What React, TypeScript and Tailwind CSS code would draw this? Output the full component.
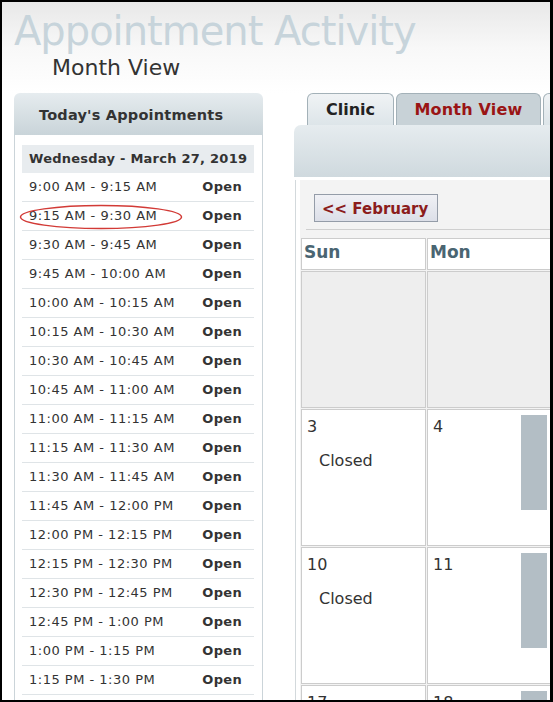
import React from "react";

const slots = [
  "9:00 AM - 9:15 AM",
  "9:15 AM - 9:30 AM",
  "9:30 AM - 9:45 AM",
  "9:45 AM - 10:00 AM",
  "10:00 AM - 10:15 AM",
  "10:15 AM - 10:30 AM",
  "10:30 AM - 10:45 AM",
  "10:45 AM - 11:00 AM",
  "11:00 AM - 11:15 AM",
  "11:15 AM - 11:30 AM",
  "11:30 AM - 11:45 AM",
  "11:45 AM - 12:00 PM",
  "12:00 PM - 12:15 PM",
  "12:15 PM - 12:30 PM",
  "12:30 PM - 12:45 PM",
  "12:45 PM - 1:00 PM",
  "1:00 PM - 1:15 PM",
  "1:15 PM - 1:30 PM",
  "1:30 PM - 1:45 PM",
];

const days = ["Sun", "Mon", "Tue", "Wed", "Thu", "Fri", "Sat"];

// March 2019 starts on a Friday
const weeks: (number | null)[][] = [
  [null, null, null, null, null, 1, 2],
  [3, 4, 5, 6, 7, 8, 9],
  [10, 11, 12, 13, 14, 15, 16],
  [17, 18, 19, 20, 21, 22, 23],
];

function DayCell({ day, col }: { day: number | null; col: number }) {
  if (day === null) {
    return <div className="h-[137px] border border-[#cccccc] bg-[#eeeeee]" />;
  }
  const closed = col === 0 || col === 6;
  return (
    <div className="h-[137px] border border-[#cccccc] bg-white flex pt-[5px] pl-[5px]">
      <div className="flex-1 min-w-0">
        <div className="mt-[1.5px] text-[16px] leading-[20px] text-[#333]">{day}</div>
        {closed && (
          <div className="mt-[14px] pl-[12px] text-[16px] leading-[20px] text-[#333]">Closed</div>
        )}
      </div>
      {!closed && <div className="w-[26px] h-[95px] mr-[4px] shrink-0 bg-[#b3bec5]" />}
    </div>
  );
}

export default function App() {
  return (
    <div className="w-[553px] h-[702px] overflow-hidden bg-white border-black border-t-2 border-l-2 border-b-2 border-r-[3px] font-['DejaVu_Sans',Verdana,sans-serif]">
      {/* page header */}
      <div className="h-[91px] bg-gradient-to-b from-[#e8e8e8] via-[#f8f8f8] to-white pt-[9px] pl-[12px]">
        <h1 className="text-[40px] leading-[40px] tracking-[-1px] text-[#c7d4db] whitespace-nowrap">
          Appointment Activity
        </h1>
        <h2 className="mt-[4px] ml-[38px] text-[22px] leading-[26px] text-[#333]">Month View</h2>
      </div>

      <div className="flex items-start">
        {/* today's appointments */}
        <div className="ml-[12px] w-[249px] shrink-0">
          <div className="h-[42px] rounded-t-[6px] bg-gradient-to-b from-[#e6ecef] to-[#c9d4d9] flex items-center pt-[3px] pl-[25px] text-[14.5px] tracking-[0.2px] font-bold text-[#333]">
            Today's Appointments
          </div>
          <div className="border-x border-[#cbd4d9] pl-[7px] pr-[8px] pt-[10px]">
            <div className="h-[28px] bg-[#e8ecef] flex items-center pl-[7px] text-[13px] tracking-[0.25px] font-bold text-[#333] whitespace-nowrap">
              Wednesday - March 27, 2019
            </div>
            {slots.map((s, i) => (
              <div
                key={s}
                className="relative h-[29px] border-b border-[#dfe4e7] flex items-center justify-between pl-[7px] pr-[12px] text-[13px] text-[#333]"
              >
                <span className="tracking-[0.5px]">{s}</span>
                <span className="font-bold tracking-[0.3px]">Open</span>
                {i === 1 && (
                  <svg
                    className="absolute left-[-3px] top-[2px]"
                    width="164"
                    height="26"
                    viewBox="0 0 164 26"
                  >
                    <ellipse cx="82" cy="13" rx="80.5" ry="11.5" fill="none" stroke="#d23a36" strokeWidth="1.5" />
                  </svg>
                )}
              </div>
            ))}
          </div>
        </div>

        {/* month view panel */}
        <div className="ml-[31px] w-[900px] shrink-0">
          <div className="flex items-end gap-[2px] pl-[13px] h-[32px]">
            <div className="w-[87px] h-[32px] rounded-t-[6px] border border-b-0 border-[#a3b1b8] bg-gradient-to-b from-[#f0f3f5] to-[#dde5e9] flex items-center justify-center text-[16px] font-bold text-[#222]">
              Clinic
            </div>
            <div className="w-[145px] h-[32px] rounded-t-[6px] border border-b-0 border-[#a3b1b8] bg-[#c8d2d7] flex items-center justify-center text-[16px] tracking-[0.2px] font-bold text-[#9a1414]">
              Month View
            </div>
            <div className="w-[110px] h-[32px] rounded-t-[6px] border border-b-0 border-[#a3b1b8] bg-gradient-to-b from-[#f0f3f5] to-[#dde5e9]" />
          </div>

          <div className="rounded-tl-[7px] overflow-hidden">
            <div className="h-[52px] bg-gradient-to-b from-[#e6ecef] to-[#cfd9de]" />
            <div className="ml-px border-l border-[#d3d9dc] pl-[4px]">
              <div className="mt-[3px] bg-[#f3f3f3] pt-[14px]">
                <div className="ml-[6px] pl-[8px] pb-[7px] border-b border-[#cfcfcf]">
                  <button className="h-[28px] w-[124px] border border-[#949ca8] bg-gradient-to-b from-[#f0f1f5] to-[#dcdfe8] flex items-center pt-[3px] pl-[7px] text-[15px] font-bold text-[#8b1c1c]">
                    &lt;&lt; February
                  </button>
                </div>
              </div>
              <div className="bg-[#f3f3f3] pt-[8px] pl-px">
                <div className="grid grid-cols-[repeat(7,125px)] gap-px">
                  {days.map((d) => (
                    <div
                      key={d}
                      className="h-[32px] border border-[#cccccc] bg-white flex items-center pb-[3px] pl-[2px] text-[17px] font-bold text-[#4a6572]"
                    >
                      {d}
                    </div>
                  ))}
                  {weeks.map((w, wi) =>
                    w.map((day, ci) => <DayCell key={`${wi}-${ci}`} day={day} col={ci} />)
                  )}
                </div>
              </div>
            </div>
          </div>
        </div>
      </div>
    </div>
  );
}
